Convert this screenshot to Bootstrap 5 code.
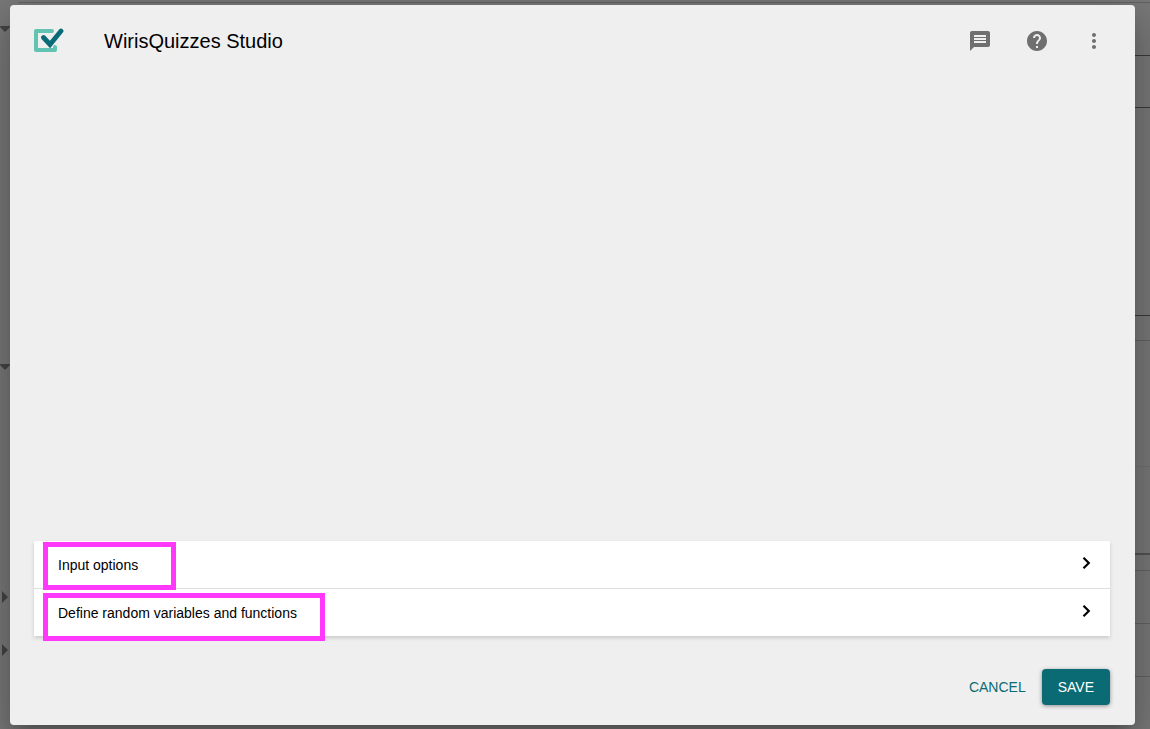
<!DOCTYPE html>
<html lang="en">
<head>
<meta charset="utf-8">
<meta name="viewport" content="width=device-width, initial-scale=1">
<title>WirisQuizzes Studio</title>
<link href="https://cdn.jsdelivr.net/npm/bootstrap@5.3.0/dist/css/bootstrap.min.css" rel="stylesheet">
<style>
  body { font-family: "Liberation Sans", Arial, sans-serif; font-size: 14px; line-height: 20px; color: #000; background: #787878; }
  /* dimmed page behind the dialog */
  .behind { z-index: 0; }
  .behind .line { border-bottom: 1px solid #626262; }
  .behind .line-dark { border-bottom-color: #3a3a3a; }
  .behind .line-mid { border-bottom: 2px solid #525252; }
  .behind .line-faint { border-bottom-color: #707070; }
  .rail { width: 10px; }
  .rail svg { display: block; fill: #444; }
  .screen { z-index: 1; padding: 5px 15px 4px 10px; }
  .studio { background: #efefef; border-radius: 4px; box-shadow: 0 11px 15px -7px rgba(0,0,0,.2), 0 24px 38px 3px rgba(0,0,0,.14), 0 9px 46px 8px rgba(0,0,0,.12); }
  .studio-head { padding: 16px 25px 16px 24px; }
  .studio-title { font-size: 20px; line-height: 24px; margin: 0 0 0 40px; }
  .tool { width: 32px; height: 40px; color: #6f6f6f; }
  .tools { gap: 25px; }
  .studio-body { padding: 0 25px 0 24px; }
  .panels { background: #fff; box-shadow: 0 2px 4px rgba(0,0,0,.16); }
  .panel-row { height: 48px; padding: 0 16px 0 24px; background: #fff; color: #000; border: 0; text-align: left; }
  .panel-item + .panel-item .panel-row { height: 47px; }
  .panel-item:first-child .panel-row { border-bottom: 1px solid #dedede; }
  .panel-row svg { margin-bottom: 4px; }
  .callout-box { left: 9px; height: 48px; border: 5px solid #ff38fb; pointer-events: none; z-index: 2; }
  .callout-short { top: 1px; width: 133px; }
  .callout-long { top: 4px; width: 282px; }
  .studio-foot { padding: 33px 25px 20px 24px; }
  .act { height: 36px; padding: 0 16px; font-size: 14px; line-height: 20px; border: 0; border-radius: 4px; }
  .act-cancel, .act-cancel:hover { color: #0a6b74; }
  .act-save, .act-save:hover { color: #fff; background: #0a6b74; box-shadow: 0 1px 4px rgba(0,0,0,.4); }
</style>
</head>
<body>
<div class="behind position-absolute top-0 start-0 w-100 h-100 overflow-hidden" aria-hidden="true">
  <div class="d-flex h-100">
    <div class="rail">
      <svg width="10" height="729" viewBox="0 0 10 729"><path d="M0 26h10v1l-5 5-5-5zM0 364h10v1l-5 5-5-5zM2 591l6 6-6 6zM2 644l6 6-6 6z"/></svg>
    </div>
    <div class="flex-grow-1 ms-2">
      <div class="line" style="height:3px"></div>
      <div class="line line-dark" style="height:53px"></div>
      <div class="line line-dark" style="height:52px"></div>
      <div class="line line-dark" style="height:208px"></div>
      <div class="line" style="height:25px"></div>
      <div class="line line-faint" style="height:126px"></div>
      <div class="line line-mid" style="height:88px"></div>
      <div class="line" style="height:16px"></div>
      <div class="line" style="height:53px"></div>
      <div class="line" style="height:53px"></div>
    </div>
  </div>
</div>
<div class="screen position-relative vh-100">
  <main class="studio d-flex flex-column h-100" role="dialog" aria-labelledby="title">
    <header class="studio-head d-flex align-items-center">
      <svg width="30" height="26" viewBox="0 0 30 26" fill="none" stroke-linecap="round" aria-hidden="true">
        <path d="M18 3H2v19h19v-3" stroke="#62c3b3" stroke-width="4" stroke-linejoin="round"/>
        <path d="M9.500 9.500l6.500 7L27 3" stroke="#0a6b78" stroke-width="4.800"/>
      </svg>
      <h1 id="title" class="studio-title fw-normal">WirisQuizzes Studio</h1>
      <div class="tools d-flex ms-auto">
        <button type="button" class="tool btn p-0 border-0 d-flex align-items-center justify-content-center" aria-label="Feedback">
          <svg width="24" height="24" viewBox="0 0 24 24" fill="currentColor"><path fill-rule="evenodd" d="M20 2H4c-1.100 0-1.990.9-1.990 2L2 22l4-4h14c1.100 0 2-.9 2-2V4c0-1.100-.9-2-2-2zM6 12h12v2H6zM6 9h12v2H6zM6 6h12v2H6z"/></svg>
        </button>
        <button type="button" class="tool btn p-0 border-0 d-flex align-items-center justify-content-center" aria-label="Help">
          <svg width="24" height="24" viewBox="0 0 24 24" fill="currentColor"><path d="M12 2C6.480 2 2 6.480 2 12s4.480 10 10 10 10-4.480 10-10S17.520 2 12 2zm1 17h-2v-2h2v2zm2.070-7.750l-.9.920C13.450 12.900 13 13.500 13 15h-2v-.5c0-1.100.45-2.100 1.170-2.830l1.240-1.260c.37-.36.590-.86.590-1.410 0-1.100-.9-2-2-2s-2 .9-2 2H8c0-2.210 1.790-4 4-4s4 1.790 4 4c0 .88-.36 1.680-.93 2.250z"/></svg>
        </button>
        <button type="button" class="tool btn p-0 border-0 d-flex align-items-center justify-content-center" aria-label="More options">
          <svg width="24" height="24" viewBox="0 0 24 24" fill="currentColor"><path d="M12 8c1.100 0 2-.9 2-2s-.9-2-2-2-2 .9-2 2 .9 2 2 2zm0 2c-1.100 0-2 .9-2 2s.9 2 2 2 2-.9 2-2-.9-2-2-2zm0 6c-1.100 0-2 .9-2 2s.9 2 2 2 2-.9 2-2-.9-2-2-2z"/></svg>
        </button>
      </div>
    </header>
    <section class="studio-body flex-grow-1 d-flex flex-column justify-content-end">
      <div class="panels">
        <div class="panel-item position-relative">
          <button type="button" class="panel-row w-100 d-flex align-items-center justify-content-between">
            <span>Input options</span>
            <svg width="16" height="16" viewBox="0 0 16 16" fill="none" stroke="#000" stroke-width="2.200" aria-hidden="true"><path d="M5.500 2.700L10.800 8l-5.300 5.300"/></svg>
          </button>
          <div class="callout-box callout-short position-absolute"></div>
        </div>
        <div class="panel-item position-relative">
          <button type="button" class="panel-row w-100 d-flex align-items-center justify-content-between">
            <span>Define random variables and functions</span>
            <svg width="16" height="16" viewBox="0 0 16 16" fill="none" stroke="#000" stroke-width="2.200" aria-hidden="true"><path d="M5.500 2.700L10.800 8l-5.300 5.300"/></svg>
          </button>
          <div class="callout-box callout-long position-absolute"></div>
        </div>
      </div>
    </section>
    <footer class="studio-foot d-flex justify-content-end">
      <button type="button" class="act act-cancel btn">CANCEL</button>
      <button type="button" class="act act-save btn">SAVE</button>
    </footer>
  </main>
</div>
<script src="https://cdn.jsdelivr.net/npm/bootstrap@5.3.0/dist/js/bootstrap.bundle.min.js"></script>
</body>
</html>
